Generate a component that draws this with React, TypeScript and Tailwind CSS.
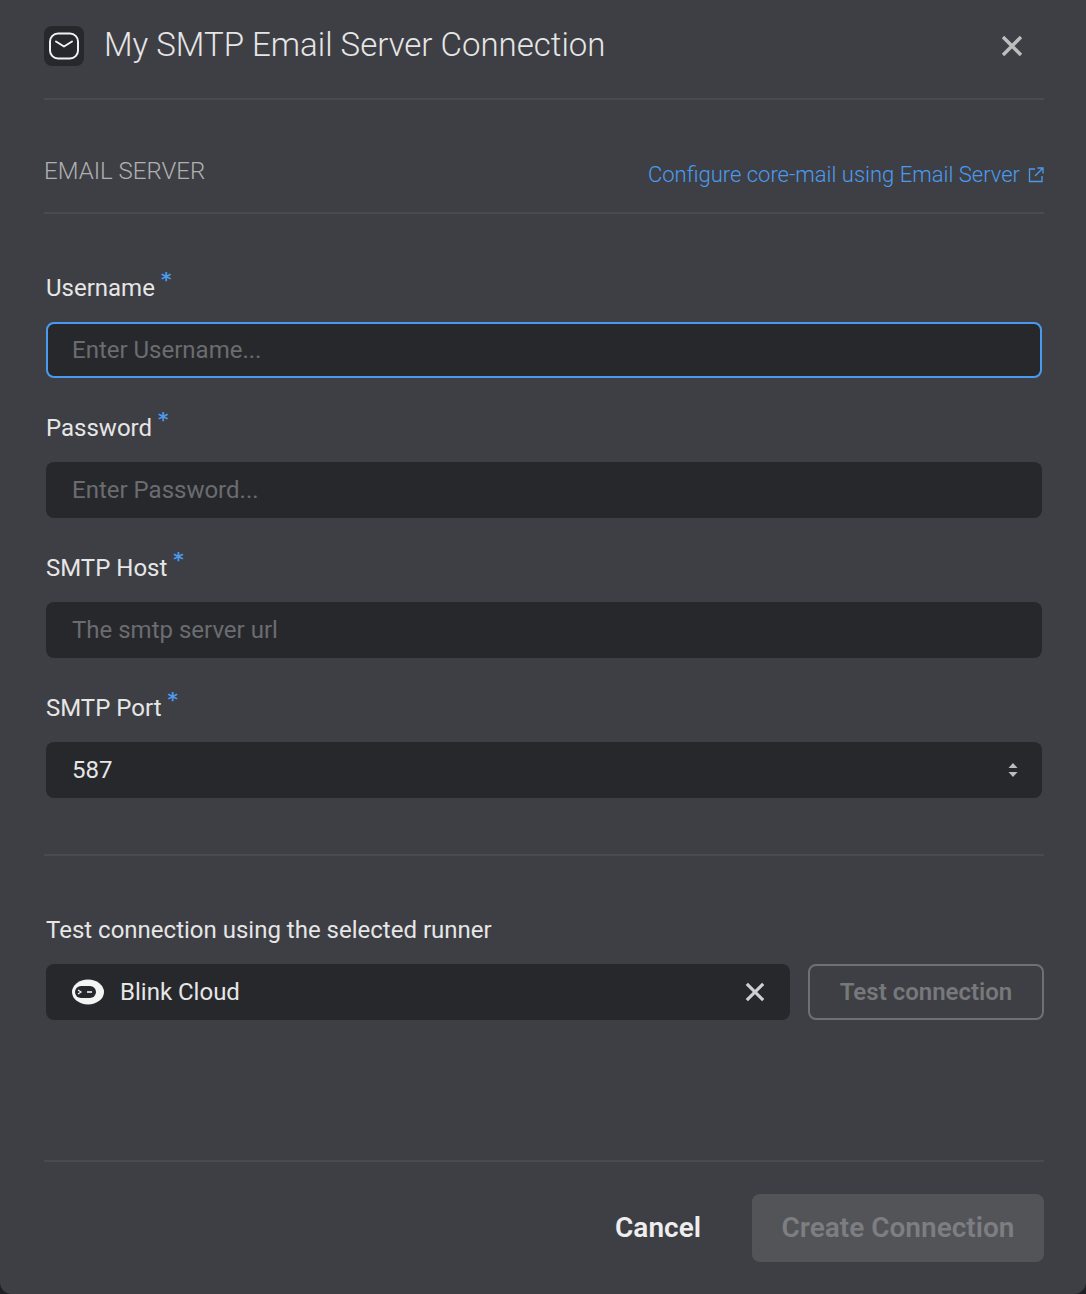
const fields = [
  { label: "Username", placeholder: "Enter Username...", focused: true },
  { label: "Password", placeholder: "Enter Password..." },
  { label: "SMTP Host", placeholder: "The smtp server url" },
];

const CloseIcon = ({ size, color }: { size: number; color: string }) => (
  <svg width={size} height={size} viewBox="0 0 22 22" fill="none" stroke={color} strokeWidth="3.4">
    <path d="M2 2l18 18M20 2L2 20" />
  </svg>
);

const FieldLabel = ({ label }: { label: string }) => (
  <div className="flex h-[32px] items-start text-[#e6e6e7]">
    <span className="mt-[2px] text-[24px] leading-[32px]">{label}</span>
    <span className="ml-[6px] font-['DejaVu_Sans',sans-serif] text-[20px] leading-[18px] font-bold text-[#4a9bf0]">*</span>
  </div>
);

export default function App() {
  return (
    <div className="h-[1294px] w-[1086px] bg-[#1f2023] font-['Roboto',sans-serif]">
      <div className="flex h-full flex-col rounded-b-[12px] bg-[#3e3f44] pr-[42px] pl-[44px]">
        <div className="flex h-[100px] shrink-0 items-start border-b-2 border-[#4a4b50] pt-[26px]">
          <div className="flex h-[40px] w-[40px] items-center justify-center rounded-[8px] bg-[#27282c]">
            <svg width="32" height="28" viewBox="0 0 32 28" fill="none" stroke="#f2f2f2" strokeWidth="2">
              <rect x="2" y="1.5" width="28" height="25" rx="8" />
              <path d="M8 9.5l8 5 8-5" strokeLinecap="round" strokeLinejoin="round" />
            </svg>
          </div>
          <div className="ml-[20px] text-[33px] leading-[38px] font-light text-[#e6e6e7]">My SMTP Email Server Connection</div>
          <div className="mt-[9px] mr-[21px] ml-auto">
            <CloseIcon size={22} color="#bdbdbe" />
          </div>
        </div>

        <div className="flex h-[114px] shrink-0 items-start justify-between border-b-2 border-[#4a4b50] pt-[56px]">
          <div className="text-[24px] leading-[30px] font-light text-[#b0b0b3]">EMAIL SERVER</div>
          <div className="flex items-center pt-[4px] text-[22px] leading-[30px] font-light text-[#4a9bf0]">
            Configure core-mail using Email Server
            <svg className="ml-[8px]" width="16" height="16" viewBox="0 0 16 16" fill="none" stroke="#4a9bf0" strokeWidth="1.3">
              <path d="M7 2H1.5v12.5H14V9M9.5 1h5.5v5.5M15 1L7 9" />
            </svg>
          </div>
        </div>

        <div className="flex flex-col px-[2px] pt-[56px]">
          {fields.map((f) => (
            <div key={f.label} className="mb-[28px] flex h-[112px] flex-col gap-[20px]">
              <FieldLabel label={f.label} />
              <div
                className={
                  f.focused
                    ? "flex h-[56px] items-center rounded-[8px] border-2 border-[#4a9bf0] bg-[#27282c] px-[24px] text-[24px] text-[#6b6c70]"
                    : "flex h-[56px] items-center rounded-[8px] bg-[#27282c] px-[26px] text-[24px] text-[#6b6c70]"
                }
              >
                {f.placeholder}
              </div>
            </div>
          ))}
          <div className="flex h-[112px] flex-col gap-[20px]">
            <FieldLabel label="SMTP Port" />
            <div className="flex h-[56px] items-center justify-between rounded-[8px] bg-[#27282c] pr-[23px] pl-[26px] text-[24px] text-[#e6e6e7]">
              587
              <svg width="12" height="20" viewBox="0 0 12 20" fill="#bdbdbe">
                <path d="M6 3l4.5 5h-9zM6 17l4.5-5h-9z" />
              </svg>
            </div>
          </div>
        </div>

        <div className="mt-[52px] h-[2px] shrink-0 bg-[#4a4b50]" />

        <div className="pt-[58px] pl-[2px]">
          <div className="text-[24px] leading-[32px] text-[#e6e6e7]">Test connection using the selected runner</div>
          <div className="mt-[18px] flex gap-[18px]">
            <div className="flex h-[56px] w-[744px] items-center rounded-[8px] bg-[#27282c] pr-[25px] pl-[26px] text-[24px] text-[#e6e6e7]">
              <svg width="32" height="26" viewBox="0 0 32 26">
                <ellipse cx="16" cy="13" rx="16" ry="12.5" fill="#f4f4f4" />
                <rect x="3" y="7" width="21" height="12" rx="6" fill="#27282c" />
                <path d="M6 11l3 2-3 2" fill="none" stroke="#f4f4f4" strokeWidth="1.3" />
                <path d="M15 13h5" stroke="#f4f4f4" strokeWidth="1.6" />
              </svg>
              <span className="ml-[16px]">Blink Cloud</span>
              <div className="ml-auto">
                <CloseIcon size={20} color="#d0d0d1" />
              </div>
            </div>
            <div className="flex h-[56px] w-[236px] items-center justify-center rounded-[8px] border-2 border-[#6f7074] text-[24px] font-semibold text-[#77787c]">
              Test connection
            </div>
          </div>
        </div>

        <div className="mt-auto flex h-[134px] shrink-0 items-start justify-end border-t-2 border-[#4a4b50] pt-[32px]">
          <div className="mr-[51px] flex h-[68px] items-center text-[28px] font-semibold text-[#eeeeef]">Cancel</div>
          <div className="flex h-[68px] w-[292px] items-center justify-center rounded-[8px] bg-[#535458] text-[28px] font-semibold text-[#7d7e82]">
            Create Connection
          </div>
        </div>
      </div>
    </div>
  );
}
